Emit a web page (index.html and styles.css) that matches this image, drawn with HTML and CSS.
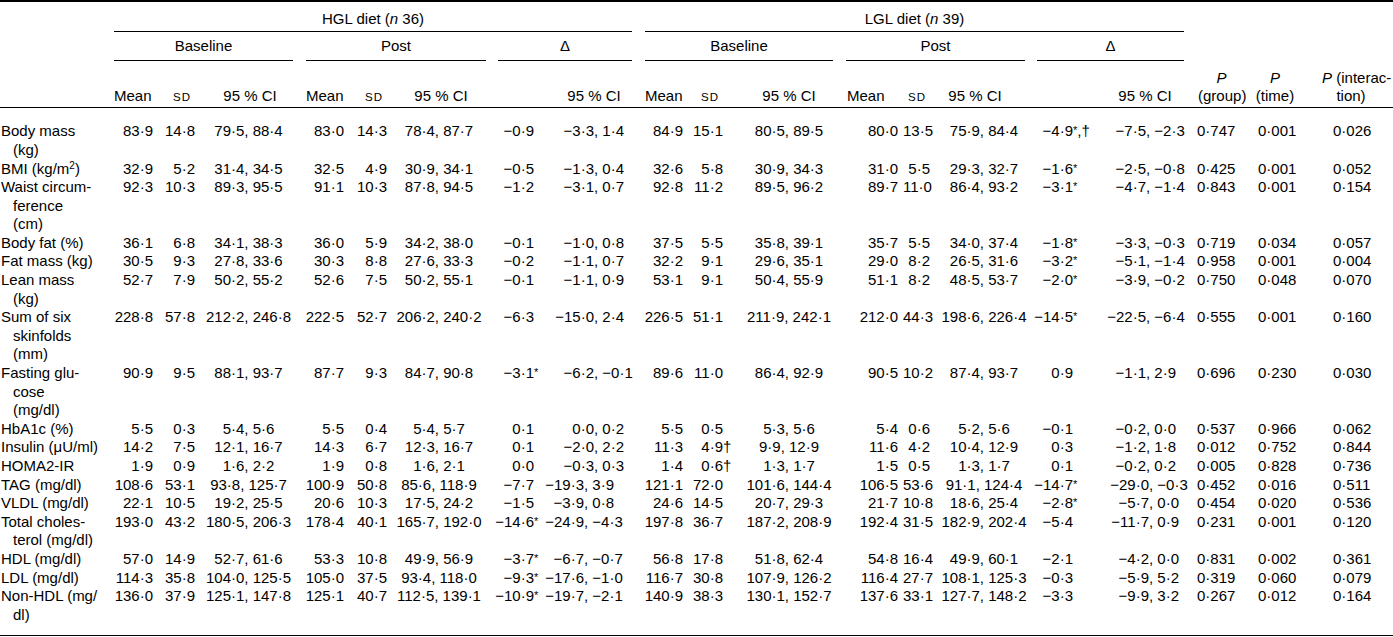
FILE: index.html
```
<!DOCTYPE html>
<html lang="en">
<head>
<meta charset="utf-8">
<title>Table</title>
<link rel="stylesheet" href="styles.css">
</head>
<body>
<table class="data">
<colgroup>
<col class="c0"><col class="c1"><col class="c2"><col class="c3"><col class="c4"><col class="c5"><col class="c6"><col class="c7"><col class="c8"><col class="c9"><col class="c10"><col class="c11"><col class="c12"><col class="c13"><col class="c14"><col class="c15"><col class="c16"><col class="c17"><col class="c18"><col class="c19">
</colgroup>
<thead>
<tr class="r1">
<th></th>
<th colspan="8"><div class="grp g-a">HGL diet (<i>n</i> 36)</div></th>
<th colspan="8"><div class="grp g-b">LGL diet (<i>n</i> 39)</div></th>
<th colspan="3"></th>
</tr>
<tr class="r2">
<th></th>
<th colspan="3"><div class="grp g-a">Baseline</div></th>
<th colspan="3"><div class="grp g-b">Post</div></th>
<th colspan="2"><div class="grp g-c">Δ</div></th>
<th colspan="3"><div class="grp g-c">Baseline</div></th>
<th colspan="3"><div class="grp g-b">Post</div></th>
<th colspan="2"><div class="grp g-b">Δ</div></th>
<th colspan="3"></th>
</tr>
<tr class="r3">
<th></th>
<th>Mean</th><th><span class="sc">SD</span></th><th>95 % CI</th>
<th>Mean</th><th><span class="sc">SD</span></th><th>95 % CI</th>
<th></th><th>95 % CI</th>
<th>Mean</th><th><span class="sc">SD</span></th><th>95 % CI</th>
<th>Mean</th><th><span class="sc">SD</span></th><th>95 % CI</th>
<th></th><th>95 % CI</th>
<th><i>P</i><br>(group)</th><th><i>P</i><br>(time)</th><th><i>P</i> (interac-<br>tion)</th>
</tr>
</thead>
<tbody class="up">
<tr><td>Body mass<br>(kg)</td><td>83·9</td><td>14·8</td><td>79·5, 88·4</td><td>83·0</td><td>14·3</td><td>78·4, 87·7</td><td>−0·9</td><td><span class="l">−3·3</span>, 1·4</td><td>84·9</td><td>15·1</td><td>80·5, 89·5</td><td>80·0</td><td>13·5</td><td>75·9, 84·4</td><td>−4·9<span class="fn"><span class="ast">*</span>,†</span></td><td><span class="l">−7·5</span>, −2·3</td><td>0·747</td><td>0·001</td><td>0·026</td></tr>
<tr><td>BMI (kg/m<sup>2</sup>)</td><td>32·9</td><td>5·2</td><td>31·4, 34·5</td><td>32·5</td><td>4·9</td><td>30·9, 34·1</td><td>−0·5</td><td><span class="l">−1·3</span>, 0·4</td><td>32·6</td><td>5·8</td><td>30·9, 34·3</td><td>31·0</td><td>5·5</td><td>29·3, 32·7</td><td>−1·6<span class="fn"><span class="ast">*</span></span></td><td><span class="l">−2·5</span>, −0·8</td><td>0·425</td><td>0·001</td><td>0·052</td></tr>
<tr><td>Waist circum-<br>ference<br>(cm)</td><td>92·3</td><td>10·3</td><td>89·3, 95·5</td><td>91·1</td><td>10·3</td><td>87·8, 94·5</td><td>−1·2</td><td><span class="l">−3·1</span>, 0·7</td><td>92·8</td><td>11·2</td><td>89·5, 96·2</td><td>89·7</td><td>11·0</td><td>86·4, 93·2</td><td>−3·1<span class="fn"><span class="ast">*</span></span></td><td><span class="l">−4·7</span>, −1·4</td><td>0·843</td><td>0·001</td><td>0·154</td></tr>
<tr><td>Body fat (%)</td><td>36·1</td><td>6·8</td><td>34·1, 38·3</td><td>36·0</td><td>5·9</td><td>34·2, 38·0</td><td>−0·1</td><td><span class="l">−1·0</span>, 0·8</td><td>37·5</td><td>5·5</td><td>35·8, 39·1</td><td>35·7</td><td>5·5</td><td>34·0, 37·4</td><td>−1·8<span class="fn"><span class="ast">*</span></span></td><td><span class="l">−3·3</span>, −0·3</td><td>0·719</td><td>0·034</td><td>0·057</td></tr>
<tr><td>Fat mass (kg)</td><td>30·5</td><td>9·3</td><td>27·8, 33·6</td><td>30·3</td><td>8·8</td><td>27·6, 33·3</td><td>−0·2</td><td><span class="l">−1·1</span>, 0·7</td><td>32·2</td><td>9·1</td><td>29·6, 35·1</td><td>29·0</td><td>8·2</td><td>26·5, 31·6</td><td>−3·2<span class="fn"><span class="ast">*</span></span></td><td><span class="l">−5·1</span>, −1·4</td><td>0·958</td><td>0·001</td><td>0·004</td></tr>
<tr><td>Lean mass<br>(kg)</td><td>52·7</td><td>7·9</td><td>50·2, 55·2</td><td>52·6</td><td>7·5</td><td>50·2, 55·1</td><td>−0·1</td><td><span class="l">−1·1</span>, 0·9</td><td>53·1</td><td>9·1</td><td>50·4, 55·9</td><td>51·1</td><td>8·2</td><td>48·5, 53·7</td><td>−2·0<span class="fn"><span class="ast">*</span></span></td><td><span class="l">−3·9</span>, −0·2</td><td>0·750</td><td>0·048</td><td>0·070</td></tr>
<tr><td>Sum of six<br>skinfolds<br>(mm)</td><td>228·8</td><td>57·8</td><td>212·2, 246·8</td><td>222·5</td><td>52·7</td><td>206·2, 240·2</td><td>−6·3</td><td><span class="l">−15·0</span>, 2·4</td><td>226·5</td><td>51·1</td><td>211·9, 242·1</td><td>212·0</td><td>44·3</td><td>198·6, 226·4</td><td>−14·5<span class="fn"><span class="ast">*</span></span></td><td><span class="l">−22·5</span>, −6·4</td><td>0·555</td><td>0·001</td><td>0·160</td></tr>
<tr><td>Fasting glu-<br>cose<br>(mg/dl)</td><td>90·9</td><td>9·5</td><td>88·1, 93·7</td><td>87·7</td><td>9·3</td><td>84·7, 90·8</td><td>−3·1<span class="fn"><span class="ast">*</span></span></td><td><span class="l">−6·2</span>, −0·1</td><td>89·6</td><td>11·0</td><td>86·4, 92·9</td><td>90·5</td><td>10·2</td><td>87·4, 93·7</td><td>0·9</td><td><span class="l">−1·1</span>, 2·9</td><td>0·696</td><td>0·230</td><td>0·030</td></tr>
<tr><td>HbA1c (%)</td><td>5·5</td><td>0·3</td><td>5·4, 5·6</td><td>5·5</td><td>0·4</td><td>5·4, 5·7</td><td>0·1</td><td><span class="l">0·0</span>, 0·2</td><td>5·5</td><td>0·5</td><td>5·3, 5·6</td><td>5·4</td><td>0·6</td><td>5·2, 5·6</td><td>−0·1</td><td><span class="l">−0·2</span>, 0·0</td><td>0·537</td><td>0·966</td><td>0·062</td></tr>
<tr><td>Insulin (μU/ml)</td><td>14·2</td><td>7·5</td><td>12·1, 16·7</td><td>14·3</td><td>6·7</td><td>12·3, 16·7</td><td>0·1</td><td><span class="l">−2·0</span>, 2·2</td><td>11·3</td><td>4·9<span class="fn">†</span></td><td>9·9, 12·9</td><td>11·6</td><td>4·2</td><td>10·4, 12·9</td><td>0·3</td><td><span class="l">−1·2</span>, 1·8</td><td>0·012</td><td>0·752</td><td>0·844</td></tr>
<tr><td>HOMA2-IR</td><td>1·9</td><td>0·9</td><td>1·6, 2·2</td><td>1·9</td><td>0·8</td><td>1·6, 2·1</td><td>0·0</td><td><span class="l">−0·3</span>, 0·3</td><td>1·4</td><td>0·6<span class="fn">†</span></td><td>1·3, 1·7</td><td>1·5</td><td>0·5</td><td>1·3, 1·7</td><td>0·1</td><td><span class="l">−0·2</span>, 0·2</td><td>0·005</td><td>0·828</td><td>0·736</td></tr>
</tbody>
<tbody class="lo">
<tr><td>TAG (mg/dl)</td><td>108·6</td><td>53·1</td><td>93·8, 125·7</td><td>100·9</td><td>50·8</td><td>85·6, 118·9</td><td>−7·7</td><td><span class="l">−19·3</span>, 3·9</td><td>121·1</td><td>72·0</td><td>101·6, 144·4</td><td>106·5</td><td>53·6</td><td>91·1, 124·4</td><td>−14·7<span class="fn"><span class="ast">*</span></span></td><td><span class="l">−29·0</span>, −0·3</td><td>0·452</td><td>0·016</td><td>0·511</td></tr>
<tr><td>VLDL (mg/dl)</td><td>22·1</td><td>10·5</td><td>19·2, 25·5</td><td>20·6</td><td>10·3</td><td>17·5, 24·2</td><td>−1·5</td><td><span class="l">−3·9</span>, 0·8</td><td>24·6</td><td>14·5</td><td>20·7, 29·3</td><td>21·7</td><td>10·8</td><td>18·6, 25·4</td><td>−2·8<span class="fn"><span class="ast">*</span></span></td><td><span class="l">−5·7</span>, 0·0</td><td>0·454</td><td>0·020</td><td>0·536</td></tr>
<tr><td>Total choles-<br>terol (mg/dl)</td><td>193·0</td><td>43·2</td><td>180·5, 206·3</td><td>178·4</td><td>40·1</td><td>165·7, 192·0</td><td>−14·6<span class="fn"><span class="ast">*</span></span></td><td><span class="l">−24·9</span>, −4·3</td><td>197·8</td><td>36·7</td><td>187·2, 208·9</td><td>192·4</td><td>31·5</td><td>182·9, 202·4</td><td>−5·4</td><td><span class="l">−11·7</span>, 0·9</td><td>0·231</td><td>0·001</td><td>0·120</td></tr>
<tr><td>HDL (mg/dl)</td><td>57·0</td><td>14·9</td><td>52·7, 61·6</td><td>53·3</td><td>10·8</td><td>49·9, 56·9</td><td>−3·7<span class="fn"><span class="ast">*</span></span></td><td><span class="l">−6·7</span>, −0·7</td><td>56·8</td><td>17·8</td><td>51·8, 62·4</td><td>54·8</td><td>16·4</td><td>49·9, 60·1</td><td>−2·1</td><td><span class="l">−4·2</span>, 0·0</td><td>0·831</td><td>0·002</td><td>0·361</td></tr>
<tr><td>LDL (mg/dl)</td><td>114·3</td><td>35·8</td><td>104·0, 125·5</td><td>105·0</td><td>37·5</td><td>93·4, 118·0</td><td>−9·3<span class="fn"><span class="ast">*</span></span></td><td><span class="l">−17·6</span>, −1·0</td><td>116·7</td><td>30·8</td><td>107·9, 126·2</td><td>116·4</td><td>27·7</td><td>108·1, 125·3</td><td>−0·3</td><td><span class="l">−5·9</span>, 5·2</td><td>0·319</td><td>0·060</td><td>0·079</td></tr>
<tr><td>Non-HDL (mg/<br>dl)</td><td>136·0</td><td>37·9</td><td>125·1, 147·8</td><td>125·1</td><td>40·7</td><td>112·5, 139·1</td><td>−10·9<span class="fn"><span class="ast">*</span></span></td><td><span class="l">−19·7</span>, −2·1</td><td>140·9</td><td>38·3</td><td>130·1, 152·7</td><td>137·6</td><td>33·1</td><td>127·7, 148·2</td><td>−3·3</td><td><span class="l">−9·9</span>, 3·2</td><td>0·267</td><td>0·012</td><td>0·164</td></tr>
</tbody>
</table>
</body>
</html>
```

FILE: styles.css
```
html, body {
  margin: 0;
  padding: 0;
  background: #fff;
}

body {
  font-family: "Liberation Sans", Arial, sans-serif;
  font-size: 15px;
  color: #000;
}

.data {
  width: 1393px;
  table-layout: fixed;
  border-collapse: separate;
  border-spacing: 0;
  border-top: 2px solid #000;
  border-bottom: 1px solid #000;
  line-height: 18.6px;
}

.data th,
.data td {
  padding: 0;
  font-weight: normal;
  white-space: nowrap;
  vertical-align: top;
}

.c0 { width: 112px; }
.c1 { width: 46px; }
.c2 { width: 42px; }
.c3 { width: 100px; }
.c4 { width: 49px; }
.c5 { width: 43px; }
.c6 { width: 100px; }
.c7 { width: 47px; }
.c8 { width: 100px; }
.c9 { width: 49px; }
.c10 { width: 40px; }
.c11 { width: 112px; }
.c12 { width: 63px; }
.c13 { width: 32px; }
.c14 { width: 96px; }
.c15 { width: 47px; }
.c16 { width: 112px; }
.c17 { width: 55px; }
.c18 { width: 77px; }
.c19 { width: 71px; }

.grp {
  text-align: center;
  border-bottom: 1px solid #000;
}
.g-a { margin: 0 7px 0 2px; }
.g-b { margin: 0 6px; }
.g-c { margin: 0 7px 0 6px; }

.r1 th { padding-top: 7.7px; }
.r1 .grp { padding-bottom: 2.7px; }
.r2 th { padding-top: 5.4px; }
.r2 .grp { padding-bottom: 4px; }

.r3 th {
  vertical-align: bottom;
  padding-bottom: 1px;
  border-bottom: 1px solid #000;
  text-align: center;
}
.r3 th:nth-child(2) { text-align: left; padding-left: 2px; }
.r3 th:nth-child(5) { text-align: left; padding-left: 6px; }
.r3 th:nth-child(10) { text-align: left; padding-left: 6px; }
.r3 th:nth-child(13) { text-align: left; padding-left: 7px; }
.r3 th:nth-child(3),
.r3 th:nth-child(6),
.r3 th:nth-child(11),
.r3 th:nth-child(14) { text-align: right; padding-right: 9px; }
.r3 th:nth-child(7) { padding-right: 2px; }
.r3 th:nth-child(9) { padding-left: 10px; }
.r3 th:nth-child(12) { padding-left: 10px; }
.r3 th:nth-child(15) { padding-right: 16px; }
.r3 th:nth-child(17) { padding-left: 22px; }
.r3 th:nth-child(18),
.r3 th:nth-child(19),
.r3 th:nth-child(20) { padding-top: 7.8px; }
.r3 th:nth-child(18) { padding-left: 8px; }
.r3 th:nth-child(19) { padding-right: 17px; }
.r3 th:nth-child(20) { padding-right: 13px; }

.sc {
  font-size: 11.5px;
  letter-spacing: 1px;
  line-height: 0;
}

.data tbody td:nth-child(1) {
  padding-left: 13px;
  text-indent: -12px;
  text-align: left;
}
.data tbody td:nth-child(2),
.data tbody td:nth-child(3),
.data tbody td:nth-child(5),
.data tbody td:nth-child(6),
.data tbody td:nth-child(8),
.data tbody td:nth-child(10),
.data tbody td:nth-child(11),
.data tbody td:nth-child(13),
.data tbody td:nth-child(14),
.data tbody td:nth-child(16) {
  text-align: right;
  padding-right: 5px;
}
.data tbody td:nth-child(4) { text-align: center; padding-right: 3px; }
.data tbody td:nth-child(7) { text-align: center; padding-right: 6px; }
.data tbody td:nth-child(12) { text-align: center; padding-left: 10px; }
.data tbody td:nth-child(15) { text-align: center; padding-left: 2px; }
.data tbody td:nth-child(9),
.data tbody td:nth-child(17) { text-align: left; }
.data tbody td:nth-child(18) { padding-left: 7px; }
.data tbody td:nth-child(19) { padding-left: 13px; }
.data tbody td:nth-child(20) { padding-left: 11px; }

.l {
  display: inline-block;
  text-align: right;
}
.up td:nth-child(9) .l { width: 55px; }
.lo td:nth-child(9) .l { width: 45px; }
.up td:nth-child(17) .l { width: 68px; }
.lo td:nth-child(17) .l { width: 71px; }

.up tr:first-child td { padding-top: 14.4px; }
.lo tr:last-child td { padding-bottom: 10.7px; }

.fn {
  display: inline-block;
  width: 0;
  text-align: left;
  white-space: nowrap;
}
.ast {
  font-size: 11px;
  line-height: 0;
  vertical-align: 2px;
}

sup {
  font-size: 10px;
  line-height: 0;
  vertical-align: 5px;
}
```
